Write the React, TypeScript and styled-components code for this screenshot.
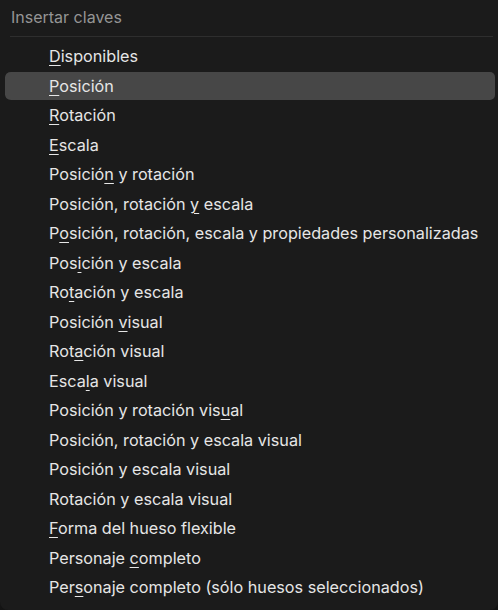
import React from "react";
import styled, { createGlobalStyle } from "styled-components";

const Global = createGlobalStyle`
  html, body { margin: 0; padding: 0; background: #141414; }
  body { font-family: Inter, "Noto Sans", sans-serif; }
`;

const Panel = styled.div`
  width: 498px;
  height: 610px;
  box-sizing: border-box;
  background: #1b1b1b;
  border-radius: 0 0 8px 8px;
  padding: 0 2px 0 5px;
  display: flex;
  flex-direction: column;
  overflow: hidden;
`;

const Title = styled.div`
  height: 36px;
  line-height: 35px;
  padding-left: 6px;
  font-size: 16px;
  color: #959595;
`;

const Separator = styled.div`
  height: 1px;
  margin: 0 3px 4.5px 5px;
  background: #2e2e2e;
`;

const List = styled.div`
  display: flex;
  flex-direction: column;
`;

const Item = styled.div<{ $active?: boolean }>`
  height: 29.5px;
  box-sizing: border-box;
  display: flex;
  align-items: center;
  padding-left: 42.5px;
  border: 1.5px solid transparent;
  border-left-width: 0;
  font-size: 16.2px;
  color: #e6e6e6;
  white-space: pre;
  border-radius: 6px;
  background: ${(p) => (p.$active ? "#474747" : "transparent")};
  background-clip: padding-box;
`;

const Text = styled.span`
  padding-left: 1.5px;
`;

const Key = styled.span`
  text-decoration: underline;
  text-decoration-thickness: 1px;
  text-underline-offset: 3px;
`;

const items: [string, number | null][] = [
  ["Disponibles", 0],
  ["Posición", 0],
  ["Rotación", 0],
  ["Escala", 0],
  ["Posición y rotación", 7],
  ["Posición, rotación y escala", 19],
  ["Posición, rotación, escala y propiedades personalizadas", 1],
  ["Posición y escala", 3],
  ["Rotación y escala", 2],
  ["Posición visual", 9],
  ["Rotación visual", 3],
  ["Escala visual", 4],
  ["Posición y rotación visual", 23],
  ["Posición, rotación y escala visual", null],
  ["Posición y escala visual", null],
  ["Rotación y escala visual", null],
  ["Forma del hueso flexible", 0],
  ["Personaje completo", 10],
  ["Personaje completo (sólo huesos seleccionados)", 3],
];

function Label({ text, k }: { text: string; k: number | null }) {
  if (k === null) return <Text>{text}</Text>;
  return (
    <Text>
      {text.slice(0, k)}
      <Key>{text[k]}</Key>
      {text.slice(k + 1)}
    </Text>
  );
}

export default function App() {
  return (
    <>
      <Global />
      <Panel>
        <Title>Insertar claves</Title>
        <Separator />
        <List>
          {items.map(([t, k], i) => (
            <Item key={i} $active={i === 1}>
              <Label text={t} k={k} />
            </Item>
          ))}
        </List>
      </Panel>
    </>
  );
}
